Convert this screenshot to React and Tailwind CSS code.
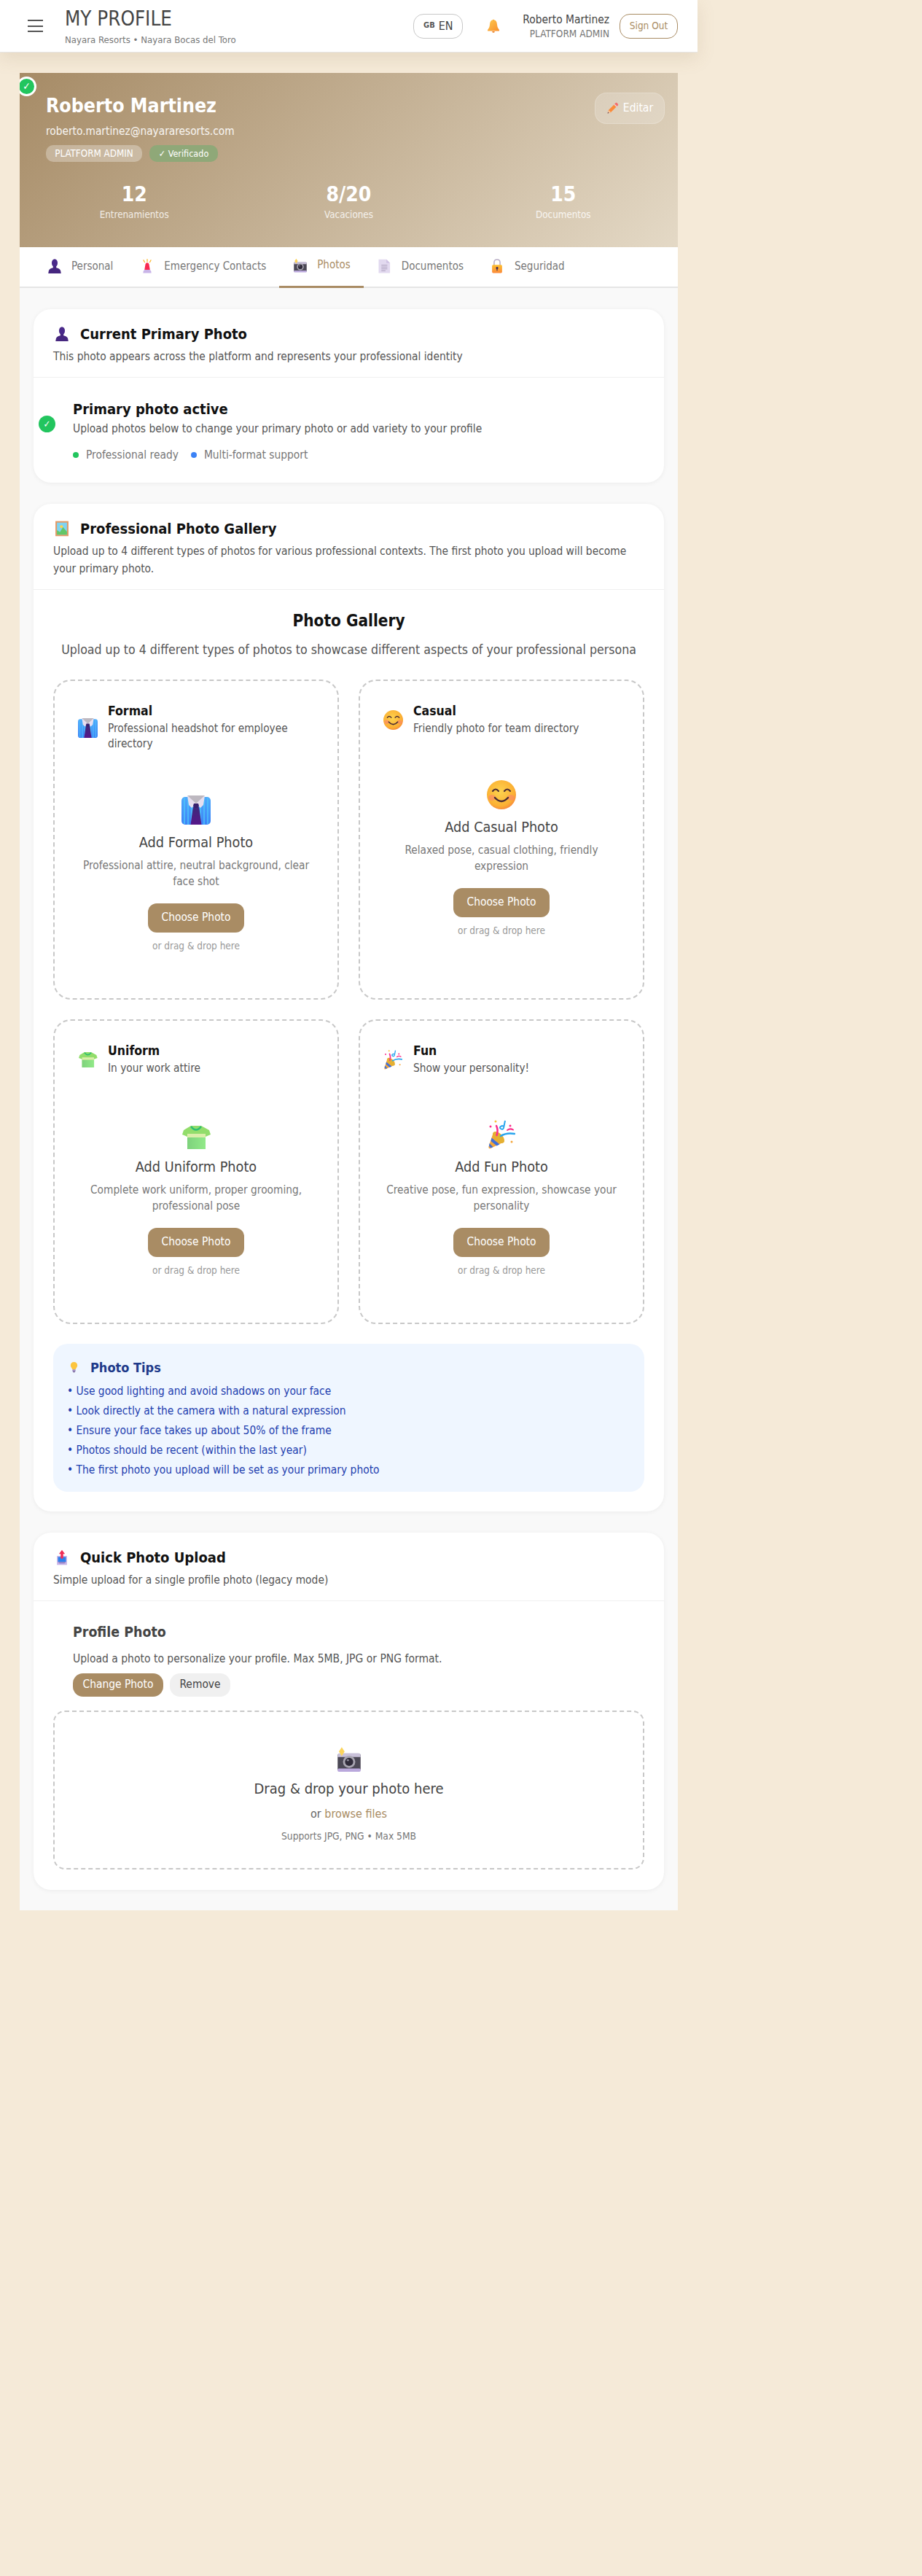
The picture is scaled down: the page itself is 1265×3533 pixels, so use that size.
import React from "react";

const Person = ({ className }) => (
  <svg viewBox="0 0 32 32" className={className}>
    <ellipse cx="16" cy="9" rx="6.5" ry="8.5" fill="#4a2a8a" />
    <path d="M12.5 16h7v3.5c4 1 8.5 2.5 9.5 6.5l1 6H2l1-6c1-4 5.500-5.500 9.500-6.500z" fill="#46277f" />
  </svg>
);
const Siren = ({ className }) => (
  <svg viewBox="0 0 32 32" className={className}>
    <path d="M16 1v5M8 3l2.500 4.500M24 3l-2.500 4.500" stroke="#fbb72c" strokeWidth="2" strokeLinecap="round" />
    <path d="M10 24L12 12q1-3.500 4-3.500T20 12l2 12z" fill="#f8284f" />
    <path d="M7 31q0-7 5-7h8q5 0 5 7z" fill="#c9b5e8" />
  </svg>
);
const Camera = ({ className }) => (
  <svg viewBox="0 0 32 32" className={className}>
    <rect x="2" y="9" width="28" height="21" rx="2" fill="#4c4956" />
    <path d="M2 12q0-3.500 3-3.500h22q3 0 3 3.500v1H2z" fill="#c9c1d9" />
    <rect x="2" y="27" width="28" height="4" rx="1.500" fill="#baa8dc" />
    <circle cx="16" cy="19" r="7.500" fill="#a9a6b2" />
    <circle cx="16" cy="19" r="5" fill="#2f2b3a" />
    <circle cx="14.500" cy="17" r="1.300" fill="#8d8a99" />
    <path d="M7 1l3.500 5.500L7 12 3.500 6.500z" fill="#fbd45c" />
  </svg>
);
const Doc = ({ className }) => (
  <svg viewBox="0 0 32 32" className={className}>
    <path d="M4 1h17l8 8v22H4z" fill="#e2d9ef" />
    <path d="M21 1l8 8h-8z" fill="#cfc2e3" />
    <path d="M10 14h13M10 18h13M10 22h13M10 26h9" stroke="#a79bb9" strokeWidth="1.500" />
  </svg>
);
const Lock = ({ className }) => (
  <svg viewBox="0 0 32 32" className={className}>
    <defs>
      <linearGradient id="lk" x1="0" y1="0" x2="0" y2="1">
        <stop offset="0" stopColor="#fdc02f" />
        <stop offset="1" stopColor="#fb8a3a" />
      </linearGradient>
    </defs>
    <path d="M9.500 15V8q0-6.500 6.500-6.500T22.500 8v7" fill="none" stroke="#b9aec6" strokeWidth="2.500" />
    <rect x="5" y="13" width="22" height="18" rx="2.500" fill="url(#lk)" />
    <circle cx="16" cy="20" r="2.500" fill="#3b2a57" />
    <rect x="15" y="20" width="2" height="6" fill="#3b2a57" />
  </svg>
);
const Pencil = ({ className }) => (
  <svg viewBox="0 0 32 32" className={className}>
    <path d="M3 29l2.500-8.500L21 5l6 6L11.500 26.500z" fill="#fb8b3a" />
    <path d="M21 5l3-3q1.500-1 3 0l3 3q1 1.500 0 3l-3 3z" fill="#f26d6d" />
    <path d="M19.500 6.500l6 6 1.500-1.500-6-6z" fill="#e9dcea" />
    <path d="M3 29l2.500-8.500 6 6z" fill="#f4c69a" />
    <path d="M3 29l1-3.500 2.500 2.500z" fill="#4a3a60" />
  </svg>
);
const Bell = ({ className }) => (
  <svg viewBox="0 0 32 32" className={className}>
    <defs>
      <linearGradient id="bl" x1="0" y1="0" x2="1" y2="1">
        <stop offset="0" stopColor="#fdc94d" />
        <stop offset="1" stopColor="#f98f2d" />
      </linearGradient>
    </defs>
    <circle cx="16" cy="3" r="2" fill="#f9a63a" />
    <path d="M16 2c5.500 0 7.500 4.500 8 10 .4 5 1.500 8 4.500 11.500q1.500 3-1 3H4.500q-2.500 0-1-3C6.500 20 7.600 17 8 12c.5-5.500 2.500-10 8-10z" fill="url(#bl)" />
    <path d="M13 27h6q-.5 3-3 3t-3-3z" fill="#e97a1f" />
  </svg>
);
const Picture = ({ className }) => (
  <svg viewBox="0 0 32 32" className={className}>
    <rect x="3" y="1" width="26" height="30" fill="#e29a66" />
    <rect x="6" y="4" width="20" height="24" fill="#7fd3f2" />
    <circle cx="15" cy="12" r="3" fill="#fcd34d" />
    <path d="M6 28v-9l6 4 6-10 8 9v6z" fill="#63c768" />
  </svg>
);
const Shirt = ({ className }) => (
  <svg viewBox="0 0 40 40" className={className}>
    <defs>
      <linearGradient id="sh" x1="0" y1="0" x2="0" y2="1">
        <stop offset="0" stopColor="#4fa9fb" />
        <stop offset="1" stopColor="#3b82f6" />
      </linearGradient>
      <linearGradient id="tie" x1="0" y1="0" x2="0" y2="1">
        <stop offset="0" stopColor="#3b2a78" />
        <stop offset="1" stopColor="#57178a" />
      </linearGradient>
    </defs>
    <rect x="0" y="2" width="40" height="38" rx="5" fill="url(#sh)" />
    <path d="M4 3v36M9 2v38M14 2v38M26 2v38M31 2v38M36 3v36" stroke="#4dc3fa" strokeWidth="1.500" />
    <path d="M17 13h6l1.500 6 3 21h-15l3-21z" fill="url(#tie)" />
    <path d="M8 0h24l-2 3L20 12 10 3z" fill="#bdb8c0" />
    <path d="M8 0l12 11-6 6L10 13zM32 0L20 11l6 6 4-4z" fill="#e7dff0" />
    <path d="M17 11h6l1 3-2 3h-4l-2-3z" fill="#38216f" />
  </svg>
);
const Smile = ({ className }) => (
  <svg viewBox="0 0 40 40" className={className}>
    <defs>
      <radialGradient id="sm" cx="0.45" cy="0.4" r="0.65">
        <stop offset="0" stopColor="#fdd34f" />
        <stop offset="0.75" stopColor="#fbb033" />
        <stop offset="1" stopColor="#f77f3e" />
      </radialGradient>
    </defs>
    <circle cx="20" cy="20" r="20" fill="url(#sm)" />
    <ellipse cx="7" cy="24" rx="5" ry="4" fill="#fb7f70" opacity="0.55" />
    <ellipse cx="33" cy="24" rx="5" ry="4" fill="#fb7f70" opacity="0.55" />
    <path d="M8 15q4-5 8 0M24 15q4-5 8 0" fill="none" stroke="#4b2c33" strokeWidth="2.200" strokeLinecap="round" />
    <path d="M11 24q9 10 18 0" fill="none" stroke="#4b2c33" strokeWidth="2.500" strokeLinecap="round" />
  </svg>
);
const Tshirt = ({ className }) => (
  <svg viewBox="0 0 40 32" className={className}>
    <defs>
      <linearGradient id="ts" x1="0" y1="0" x2="1" y2="0">
        <stop offset="0" stopColor="#7ed27c" />
        <stop offset="1" stopColor="#92ea89" />
      </linearGradient>
    </defs>
    <path d="M13 0h14l11 6 2 6-7 3v17H8V15l-7-3 2-6z" fill="#92dd6b" />
    <rect x="8" y="16" width="25" height="16" fill="url(#ts)" />
    <rect x="8" y="11" width="25" height="5" fill="#dbeeaa" />
    <path d="M13 1q7 9 14 0" fill="none" stroke="#2fbf71" strokeWidth="2.500" />
  </svg>
);
const Party = ({ className }) => (
  <svg viewBox="0 0 37 40" className={className}>
    <path d="M7 17l15 13L3 39q-3 1-2.500-2.500z" fill="#f4a63a" />
    <path d="M4.500 24.500l11 9-4 2-8-6.500zM1.500 32l5 5-3 1.500L1 36z" fill="#3f70d9" />
    <ellipse cx="14" cy="24" rx="5.500" ry="10" transform="rotate(-45 14 24)" fill="#e5b032" />
    <path d="M11 8q3 6 .5 13" fill="none" stroke="#fa2c8a" strokeWidth="2.500" strokeLinecap="round" />
    <path d="M17 22q8-5 19-3" fill="none" stroke="#2aa5ee" strokeWidth="2.500" strokeLinecap="round" />
    <path d="M23 1l-2 10q-1 3-4 1t2-4l3 1" fill="none" stroke="#2aa5ee" strokeWidth="2" />
    <path d="M26 14q4-3 8-.5" fill="none" stroke="#fa2c8a" strokeWidth="2" strokeLinecap="round" />
    <circle cx="3" cy="9" r="1.500" fill="#fa2c8a" />
    <circle cx="30" cy="8" r="1.500" fill="#fa2c8a" />
    <circle cx="10" cy="2" r="1.500" fill="#f9c23c" />
    <circle cx="32" cy="30" r="1.500" fill="#f4a63a" />
  </svg>
);
const Bulb = ({ className }) => (
  <svg viewBox="0 0 32 32" className={className}>
    <path d="M16 1c6 0 10 4 10 10 0 5-4 7-5 12H11c-1-5-5-7-5-12C6 5 10 1 16 1z" fill="#fcc53f" />
    <rect x="11.500" y="23" width="9" height="6" rx="1" fill="#9d8bc1" />
    <rect x="13" y="29" width="6" height="2.500" rx="1" fill="#6d5b8f" />
  </svg>
);
const Upload = ({ className }) => (
  <svg viewBox="0 0 32 32" className={className}>
    <path d="M6 13h20v18H6z" fill="#c9b5e8" />
    <path d="M8 15h16v10H8z" fill="#2f80ea" />
    <path d="M8 25h16l-3 3H11z" fill="#8f7fc5" />
    <path d="M16 1l6 8h-3.500v9h-5V9H10z" fill="#ef2d56" />
  </svg>
);
const Check = ({ className }) => (
  <span className={"flex items-center justify-center rounded-full bg-[#22c55e] text-white " + className}>✓</span>
);

const tabs = [
  { I: Person, t: "Personal" },
  { I: Siren, t: "Emergency Contacts" },
  { I: Camera, t: "Photos", active: true },
  { I: Doc, t: "Documentos" },
  { I: Lock, t: "Seguridad" },
];

const SectionHead = ({ I, title, sub, iconClass }) => (
  <div className="border-b border-[#f0f0f0] pl-[27px] pr-[27px] pt-[20px] pb-[16px]">
    <div className="flex h-[28px] items-center gap-[13px]">
      <div className="flex w-[24px] justify-center"><I className={iconClass} /></div>
      <h2 className="text-[20px] leading-[28px] font-bold text-[#111]">{title}</h2>
    </div>
    <p className="mt-[5px] text-[15.4px] leading-[24px] text-[#555]">{sub}</p>
  </div>
);

const Cell = ({ I, Big, bigClass, iconClass, title, desc, add, hint }) => (
  <div className="rounded-[24px] border-2 border-dashed border-[#c8c8c8] px-[32px] pt-[31px] pb-[63px]">
    <div className="flex items-center gap-[14px]">
      <div className="flex w-[27px] flex-none justify-center"><I className={iconClass} /></div>
      <div>
        <div className="text-[17.5px] leading-[20px] font-bold text-[#111]">{title}</div>
        <div className="mt-[4px] text-[15.3px] leading-[21px] text-[#555]">{desc}</div>
      </div>
    </div>
    <div className="mt-[60px] flex flex-col items-center text-center">
      <div className="flex h-[40px] items-end"><Big className={bigClass} /></div>
      <div className="mt-[10px] text-[19.7px] leading-[30px] text-[#444]">{add}</div>
      <div className="mt-[5px] text-[15.3px] leading-[22px] text-[#777]">{hint}</div>
      <button className="mt-[19px] h-[40px] w-[132px] rounded-[12px] bg-[#a98c64] text-[15.4px] text-white">Choose Photo</button>
      <div className="mt-[9px] text-[13.5px] leading-[18px] text-[#999]">or drag &amp; drop here</div>
    </div>
  </div>
);

export default function App() {
  return (
    <div className="min-h-[3533px] w-full bg-[#f5ead8] font-['DejaVu_Sans_Condensed','DejaVu_Sans',sans-serif]">
      <header className="flex h-[72px] w-[957px] items-center justify-between border-b border-[#e6e6e6] bg-white pl-[38px] pr-[27px] shadow-[0_8px_24px_rgba(139,111,71,0.15)]">
        <div className="flex items-center gap-[30px]">
          <div className="flex w-[21px] flex-col gap-[5.5px]">
            <span className="h-[2px] bg-[#555]" />
            <span className="h-[2px] bg-[#555]" />
            <span className="h-[2px] bg-[#555]" />
          </div>
          <div className="pt-[3px]">
            <h1 className="text-[27.5px] leading-[30px] text-[#444]">MY PROFILE</h1>
            <p className="mt-[5px] text-[13.1px] leading-[20px] text-[#777]">Nayara Resorts • Nayara Bocas del Toro</p>
          </div>
        </div>
        <div className="flex items-center">
          <button className="flex h-[34px] w-[68px] items-center justify-center gap-[5px] rounded-[14px] border border-[#c8c8c8] text-[16px] text-[#444]">
            <span className="text-[11px] font-bold text-[#555]">GB</span>EN
          </button>
          <Bell className="ml-[32px] h-[20px] w-[20px]" />
          <div className="ml-[30px] text-right">
            <div className="text-[15.4px] leading-[20px] text-[#444]">Roberto Martinez</div>
            <div className="text-[13.5px] leading-[18px] text-[#777]">PLATFORM ADMIN</div>
          </div>
          <button className="ml-[14px] h-[34px] w-[80px] rounded-[14px] border border-[#a98c64] text-[13.5px] text-[#a98c64]">Sign Out</button>
        </div>
      </header>

      <main className="ml-[27px] mt-[28px] w-[903px]">
        <section className="relative h-[239px] overflow-hidden bg-[linear-gradient(135deg,#a68b66_0%,#e4d9c6_100%)] text-white">
          <Check className="absolute -left-[4px] top-[5px] h-[27px] w-[27px] border-[3px] border-white text-[14px]" />
          <button className="absolute left-[789px] top-[27px] flex h-[43px] w-[96px] items-center justify-center gap-[6px] rounded-[16px] border border-white/20 bg-white/20 text-[15.5px]">
            <Pencil className="h-[17px] w-[17px]" />Editar
          </button>
          <div className="pl-[36px] pt-[26px]">
            <h2 className="text-[26.5px] leading-[38px] font-bold">Roberto Martinez</h2>
            <p className="mt-[5px] text-[15.3px] leading-[22px] text-white/90">roberto.martinez@nayararesorts.com</p>
            <div className="mt-[8px] flex gap-[10px] leading-[23px]">
              <span className="w-[132px] rounded-[10px] bg-white/30 text-center text-[13.3px]">PLATFORM ADMIN</span>
              <span className="w-[94px] rounded-[10px] bg-[#8fa878] text-center text-[12.5px]">✓ Verificado</span>
            </div>
          </div>
          <div className="mt-[29px] grid grid-cols-3 gap-[16px] px-[18px] text-center">
            {[["12", "Entrenamientos"], ["8/20", "Vacaciones"], ["15", "Documentos"]].map(([n, l]) => (
              <div key={l}>
                <div className="text-[28px] leading-[32px] font-bold">{n}</div>
                <div className="mt-[3px] text-[13.3px] leading-[18px] text-white/80">{l}</div>
              </div>
            ))}
          </div>
        </section>

        <nav className="flex h-[56px] border-b-2 border-[#e5e5e5] bg-white pl-[19px]">
          {tabs.map(({ I, t, active }) => (
            <div key={t} className={"-mb-[2px] flex items-center gap-[13px] px-[18px] pb-[4px] text-[15px] " + (active ? "border-b-[3px] border-[#a98c64] text-[#a98c64]" : "text-[#777]")}>
              <div className="flex w-[21px] justify-center"><I className="h-[20px] w-[20px]" /></div>
              {t}
            </div>
          ))}
        </nav>

        <div className="flex flex-col gap-[29px] bg-[#f9f9f9] px-[19px] pb-[28px] pt-[29px]">
          <section className="rounded-[24px] bg-white shadow-[0_1px_6px_rgba(0,0,0,0.06)]">
            <SectionHead I={Person} iconClass="h-[20px] w-[20px]" title="Current Primary Photo" sub="This photo appears across the platform and represents your professional identity" />
            <div className="flex items-start gap-[24px] pb-[28px] pl-[7px] pt-[29px]">
              <Check className="mt-[23px] h-[23px] w-[23px] flex-none text-[13px]" />
              <div>
                <h3 className="text-[20px] leading-[28px] font-bold text-[#111]">Primary photo active</h3>
                <p className="mt-[2px] text-[15.4px] leading-[22px] text-[#555]">Upload photos below to change your primary photo or add variety to your profile</p>
                <div className="mt-[15px] flex items-center text-[15.4px] leading-[20px] text-[#777]">
                  <span className="h-[8px] w-[8px] rounded-full bg-[#22c55e]" />
                  <span className="ml-[10px]">Professional ready</span>
                  <span className="ml-[17px] h-[8px] w-[8px] rounded-full bg-[#3b82f6]" />
                  <span className="ml-[10px]">Multi-format support</span>
                </div>
              </div>
            </div>
          </section>

          <section className="rounded-[24px] bg-white pb-[27px] shadow-[0_1px_6px_rgba(0,0,0,0.06)]">
            <SectionHead I={Picture} iconClass="h-[22px] w-[22px]" title="Professional Photo Gallery" sub={<>Upload up to 4 different types of photos for various professional contexts. The first photo you upload will become<br />your primary photo.</>} />
            <div className="px-[27px]">
              <h3 className="pt-[26px] text-center text-[22.4px] leading-[32px] font-bold text-[#111]">Photo Gallery</h3>
              <p className="mt-[10px] text-center text-[17.6px] leading-[28px] text-[#555]">Upload up to 4 different types of photos to showcase different aspects of your professional persona</p>
              <div className="mt-[27px] grid grid-cols-2 gap-[27px]">
                <Cell I={Shirt} Big={Shirt} iconClass="h-[27px] w-[27px]" bigClass="h-[40px] w-[40px]" title="Formal" desc="Professional headshot for employee directory" add="Add Formal Photo" hint={<>Professional attire, neutral background, clear<br />face shot</>} />
                <Cell I={Smile} Big={Smile} iconClass="h-[27px] w-[27px]" bigClass="h-[40px] w-[40px]" title="Casual" desc="Friendly photo for team directory" add="Add Casual Photo" hint={<>Relaxed pose, casual clothing, friendly<br />expression</>} />
                <Cell I={Tshirt} Big={Tshirt} iconClass="h-[21px] w-[27px]" bigClass="h-[32px] w-[40px]" title="Uniform" desc="In your work attire" add="Add Uniform Photo" hint={<>Complete work uniform, proper grooming,<br />professional pose</>} />
                <Cell I={Party} Big={Party} iconClass="h-[27px] w-[25px]" bigClass="h-[40px] w-[37px]" title="Fun" desc="Show your personality!" add="Add Fun Photo" hint={<>Creative pose, fun expression, showcase your<br />personality</>} />
              </div>
              <div className="mt-[27px] rounded-[20px] bg-[#eff6ff] px-[19px] pb-[16px] pt-[20px]">
                <div className="flex h-[24px] items-center gap-[15px] pl-[2px]">
                  <Bulb className="h-[20px] w-[15px]" />
                  <span className="text-[18px] font-bold text-[#1e3a8a]">Photo Tips</span>
                </div>
                <ul className="mt-[8px] text-[15.4px] leading-[27px] text-[#1e40af]">
                  <li>• Use good lighting and avoid shadows on your face</li>
                  <li>• Look directly at the camera with a natural expression</li>
                  <li>• Ensure your face takes up about 50% of the frame</li>
                  <li>• Photos should be recent (within the last year)</li>
                  <li>• The first photo you upload will be set as your primary photo</li>
                </ul>
              </div>
            </div>
          </section>

          <section className="rounded-[24px] bg-white pb-[28px] shadow-[0_1px_6px_rgba(0,0,0,0.06)]">
            <SectionHead I={Upload} iconClass="h-[22px] w-[22px]" title="Quick Photo Upload" sub="Simple upload for a single profile photo (legacy mode)" />
            <div className="px-[27px] pt-[31px]">
              <div className="pl-[27px]">
                <h3 className="text-[19.4px] leading-[24px] font-bold text-[#444]">Profile Photo</h3>
                <p className="mt-[13px] text-[15.5px] leading-[22px] text-[#555]">Upload a photo to personalize your profile. Max 5MB, JPG or PNG format.</p>
                <div className="mt-[9px] flex gap-[9px] text-[15.4px]">
                  <button className="h-[32px] w-[124px] rounded-[14px] bg-[#a98c64] text-white">Change Photo</button>
                  <button className="h-[32px] w-[83px] rounded-[14px] bg-[#f0f0f0] text-[#444]">Remove</button>
                </div>
              </div>
              <div className="mt-[19px] flex h-[218px] flex-col items-center rounded-[16px] border-2 border-dashed border-[#c8c8c8] pt-[47px]">
                <Camera className="h-[36px] w-[42px]" />
                <div className="mt-[8px] text-[20px] leading-[28px] text-[#444]">Drag &amp; drop your photo here</div>
                <div className="mt-[10px] text-[16px] leading-[22px] text-[#666]">or <span className="text-[#a98c64]">browse files</span></div>
                <div className="mt-[10px] text-[13.7px] leading-[18px] text-[#777]">Supports JPG, PNG • Max 5MB</div>
              </div>
            </div>
          </section>
        </div>
      </main>
    </div>
  );
}
